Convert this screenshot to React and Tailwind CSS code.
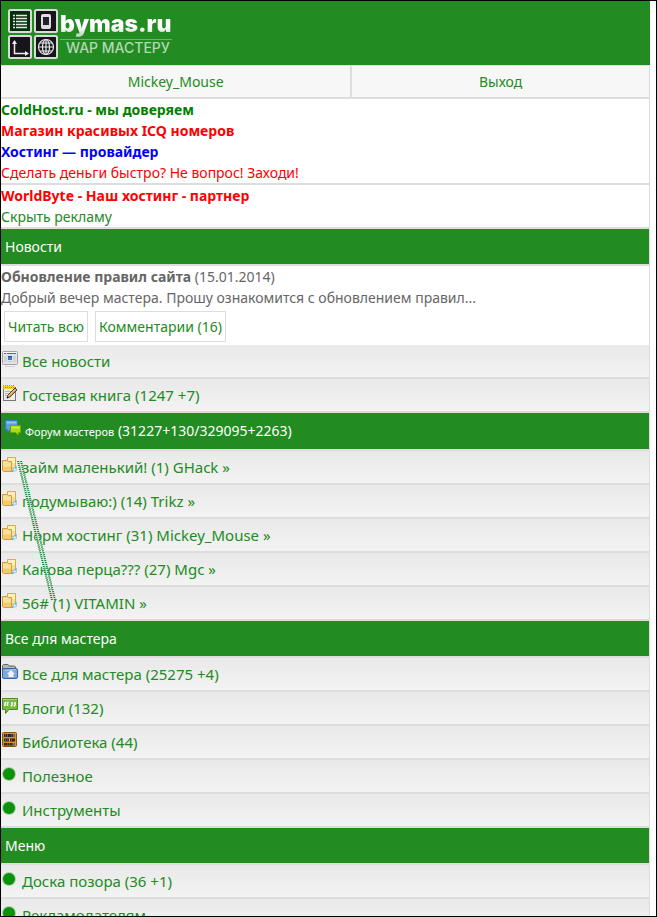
const ads = [
    { text: "ColdHost.ru - мы доверяем", className: "font-bold text-[#008000]" },
    { text: "Магазин красивых ICQ номеров", className: "font-bold text-[#ff0000]" },
    { text: "Хостинг — провайдер", className: "font-bold text-[#0000ff]" },
    { text: "Сделать деньги быстро? Не вопрос! Заходи!", className: "text-[#ff0000]" },
];

const topics = [
    "займ маленький! (1) GHack »",
    "подумываю:) (14) Trikz »",
    "Норм хостинг (31) Mickey_Mouse »",
    "Какова перца??? (27) Mgc »",
    "56# (1) VITAMIN »",
];

function NewsIcon() {
    return (
        <svg width="16" height="16" viewBox="0 0 16 16" aria-hidden="true">
            <rect x="0.5" y="0.5" width="15" height="13" rx="1" fill="#e2e3e5" stroke="#a2a4a8" />
            <path d="M1 1.5h14" stroke="#f6f6f6" />
            <path d="M2 2.5h2M5 2.5h9" stroke="#62666e" />
            <path d="M2 6h3M2 8h3M2 10h3M11 6h3M11 8h3M11 10h3M6 10.5h4" stroke="#c3c5c9" />
            <rect x="6" y="5" width="4" height="4" fill="#2f7fd0" />
            <path d="M6 5.5h4" stroke="#174f99" />
            <path d="M3 15.5h10" stroke="#d2d2d2" />
        </svg>
    );
}

function NotepadIcon() {
    return (
        <svg width="16" height="16" viewBox="0 0 16 16" aria-hidden="true">
            <rect x="1.5" y="2.5" width="12" height="13" fill="#ededeb" stroke="#77777a" />
            <path d="M1 1h12v3H1z" fill="#f3cf3a" />
            <path d="M1.5 0v4M3.5 0v4M5.5 0v4M7.5 0v4M9.5 0v4M11.5 0v4" stroke="#c08a12" strokeDasharray="1 1" />
            <path d="M3 6.5h7M3 8.5h5M3 10.5h3" stroke="#b5b5b5" />
            <path d="M5 13l1-3 7-7 2 2-7 7z" fill="#c99a55" stroke="#4a3418" strokeWidth="0.9" />
            <path d="M6.5 11L13 4.5" stroke="#f4d9a0" />
            <path d="M4.5 13.5l1-2 1 1z" fill="#111" />
        </svg>
    );
}

function ForumIcon() {
    return (
        <svg width="16" height="16" viewBox="0 0 16 16" aria-hidden="true">
            <path d="M0.5 0.5h12v9H5l-2.5 3V9.5h-2z" fill="#5b9fe0" stroke="#3a78bd" />
            <path d="M1.5 1.5h10v2h-10z" fill="#8fc3f2" />
            <path d="M5.5 5.5h10v7h-2V15l-3-2.5h-5z" fill="#a5dc12" stroke="#73a800" />
            <path d="M6.5 6.5h8v2h-8z" fill="#c5ee4c" />
        </svg>
    );
}

function TopicIcon() {
    return (
        <svg width="16" height="16" viewBox="0 0 16 16" aria-hidden="true">
            <path d="M5.5 0.5h8v11h-8z" fill="#fadf92" stroke="#dca953" />
            <path d="M6 1h7v5H6z" fill="#fff0b8" />
            <path d="M0.5 3.5h5l1 1h3v10h-8l-1-1z" fill="#f2cb6e" stroke="#d29c46" />
            <path d="M1 4.5h4l1 1h3v4H1z" fill="#fae09a" />
            <path d="M10 14.5l2.5-4.5 2-1v4.5z" fill="#e3e7ea" stroke="#b3bcc3" strokeWidth="0.8" />
            <path d="M13.5 9.5v2M10.5 13v2" stroke="#42b4ec" strokeWidth="1.5" />
        </svg>
    );
}

function HomeFolderIcon() {
    return (
        <svg width="16" height="16" viewBox="0 0 16 16" aria-hidden="true">
            <path d="M0.5 13V1.5l1-1H6l1 1.5h5.5l1 1V6" fill="#b4b6b9" stroke="#65676b" />
            <rect x="0.5" y="4.5" width="15" height="10" rx="1.5" fill="#7ba9dd" stroke="#3a66a3" />
            <path d="M3 6.5l11-1" stroke="#a9cbf0" />
            <path d="M9 6l4 4h-1.5v3h-5v-3H5z" fill="#f3f3f3" />
        </svg>
    );
}

function QuoteIcon() {
    return (
        <svg width="16" height="16" viewBox="0 0 16 16" aria-hidden="true">
            <path d="M0.5 0.5h15v11H7l-3.5 4v-4h-3z" fill="#78b944" stroke="#4b8b1f" />
            <path d="M1 1.5h14" stroke="#a5d977" />
            <path d="M3 8V5l1-1M5.5 8V5l1-1M10 4v3l-1 1.5M13 4v3l-1 1.5" fill="none" stroke="#fff" strokeWidth="1.5" />
        </svg>
    );
}

function BookshelfIcon() {
    return (
        <svg width="16" height="16" viewBox="0 0 16 16" aria-hidden="true">
            <rect x="0.5" y="0.5" width="14" height="14" rx="1" fill="#d2942f" stroke="#8a560f" />
            <path d="M2 2h11v3H2zM2 6.5h11v3H2zM2 11h11v2.5H2z" fill="#3a2010" />
            <path d="M3.5 2v3M9.5 6.5v3M5.5 11v2.5" stroke="#d0281a" />
            <path d="M5.5 2v3M3.5 6.5v3M7.5 11v2.5" stroke="#238a2c" />
            <path d="M9.5 2v3M5.5 6.5v3M10.5 11v2.5" stroke="#1c4fe4" strokeWidth="1.5" />
            <path d="M12 2v3M7.5 6.5v3M12 11v2.5" stroke="#e8b930" />
        </svg>
    );
}

function DotIcon() {
    return (
        <svg width="16" height="16" viewBox="0 0 16 16" aria-hidden="true">
            <circle cx="7" cy="8" r="7" fill="#0a960a" opacity="0.3" />
            <circle cx="7" cy="8" r="6" fill="#0a920a" />
        </svg>
    );
}

function LogoTiles() {
    return (
        <svg width="50" height="50" viewBox="0 0 50 50" aria-hidden="true">
            <g stroke="#d8dcd8" strokeWidth="2">
                <rect x="1" y="1" width="22" height="22" rx="1.5" fill="#06300a" />
                <rect x="27" y="1" width="22" height="22" rx="1.5" fill="#17141c" />
                <rect x="1" y="27" width="22" height="22" rx="1.5" fill="#17141c" />
                <rect x="27" y="27" width="22" height="22" rx="1.5" fill="#17141c" />
            </g>
            <path d="M5 6.5h2M5 9.5h2M5 12.5h2M5 15.5h2M5 18.5h2M8 6.5h11M8 9.5h11M8 12.5h11M8 15.5h11M8 18.5h11" stroke="#e6e6e6" strokeWidth="1.5" />
            <rect x="33" y="5" width="10" height="15" rx="2" fill="#dedee2" />
            <rect x="35" y="8" width="6" height="8" fill="#24212b" />
            <path d="M6.5 32v12.5h12" fill="none" stroke="#eee" strokeWidth="1.5" />
            <path d="M4 35l2.5-4 2.5 4zM17 42l4 2.5-4 2.5z" fill="#eee" />
            <g fill="none" stroke="#e6e6e6" strokeWidth="1.2">
                <circle cx="38" cy="38" r="7.5" />
                <ellipse cx="38" cy="38" rx="3.5" ry="7.5" />
                <path d="M38 30.5v15M30.5 38h15M32 34h12M32 42h12" />
            </g>
        </svg>
    );
}

function Title({ children }) {
    return (
        <h2 className="border-b-2 border-[#dddddd] bg-[#228b22] px-1 py-[7px] leading-[21px] text-white">
            {children}
        </h2>
    );
}

function Row({ icon, children }) {
    return (
        <li className="border-b-2 border-[#dddddd] bg-linear-to-b from-[#e9e9e9] to-[#f3f3f3]">
            <a href="#" className="flex h-8 items-start gap-1 pl-px pt-1.5 text-[15px] leading-5 whitespace-nowrap">
                <span className="w-4 shrink-0">{icon}</span>
                <span>{children}</span>
            </a>
        </li>
    );
}

export default function App() {
    return (
        <div className="h-screen overflow-hidden border border-black bg-white pr-1.5 font-['Comic_Sans_MS','Noto_Sans',sans-serif] text-sm leading-[21px] text-[#228b22]">
            <header className="flex h-16 items-start gap-0.5 bg-[#228b22] pl-[7px] pt-2">
                <LogoTiles />
                <div className="font-['Inter',sans-serif]">
                    <div className="bg-linear-to-b from-white from-60% to-[#a9c4a9] bg-clip-text text-[23px] leading-[30px] font-black text-transparent">
                        bymas.ru
                    </div>
                    <div className="border-t border-[#6fb56f] pl-1.5 text-sm leading-4 font-medium text-[#b4d8b4]">
                        WAP МАСТЕРУ
                    </div>
                </div>
            </header>

            <div className="border-r border-[#dddddd]">
                <nav className="flex border-t border-b-2 border-[#dddddd] bg-[#f7f7f7] text-center">
                    <a href="#" className="flex-auto border-r-2 border-[#dddddd] py-[5px]">Mickey_Mouse</a>
                    <a href="#" className="flex-auto py-[5px]">Выход</a>
                </nav>

                <div className="border-b-2 border-[#dddddd]">
                    {ads.map((ad) => (
                        <a key={ad.text} href="#" className={`block ${ad.className}`}>{ad.text}</a>
                    ))}
                </div>
                <div className="border-b-2 border-[#dddddd]">
                    <a href="#" className="block font-bold text-[#ff0000]">WorldByte - Наш хостинг - партнер</a>
                    <a href="#" className="block">Скрыть рекламу</a>
                </div>

                <Title>Новости</Title>
                <div className="text-[#666666]">
                    <p><b>Обновление правил сайта</b> (15.01.2014)</p>
                    <p>Добрый вечер мастера. Прошу ознакомится с обновлением правил...</p>
                    <div className="flex gap-[7px] px-[3px] py-[3px] text-[#228b22]">
                        <a href="#" className="border border-[#dddddd] px-[3px] py-1">Читать всю</a>
                        <a href="#" className="border border-[#dddddd] px-[3px] py-1">Комментарии (16)</a>
                    </div>
                </div>
                <ul>
                    <Row icon={<NewsIcon />}>Все новости</Row>
                    <Row icon={<NotepadIcon />}>Гостевая книга (1247 +7)</Row>
                </ul>

                <Title>
                    <a href="#" className="flex items-start gap-1">
                        <ForumIcon />
                        <span className="leading-[22px]"><span className="text-[11px] leading-none">Форум мастеров</span> (31227+130/329095+2263)</span>
                    </a>
                </Title>
                <div className="relative">
                    <ul>
                        {topics.map((topic) => (
                            <Row key={topic} icon={<TopicIcon />}>{topic}</Row>
                        ))}
                    </ul>
                    <svg className="pointer-events-none absolute top-2.5 left-4" width="40" height="142" viewBox="0 0 40 142" aria-hidden="true">
                        <path d="M2 0L36 139" stroke="#e6f2e0" strokeWidth="5" opacity="0.6" />
                        <g strokeWidth="2" strokeDasharray="1 1">
                            <path d="M1 0L35 139" stroke="#007a2a" />
                            <path d="M4 0L38 139" stroke="#007a3a" />
                        </g>
                    </svg>
                </div>

                <Title>Все для мастера</Title>
                <ul>
                    <Row icon={<HomeFolderIcon />}>Все для мастера (25275 +4)</Row>
                    <Row icon={<QuoteIcon />}>Блоги (132)</Row>
                    <Row icon={<BookshelfIcon />}>Библиотека (44)</Row>
                    <Row icon={<DotIcon />}>Полезное</Row>
                    <Row icon={<DotIcon />}>Инструменты</Row>
                </ul>

                <Title>Меню</Title>
                <ul>
                    <Row icon={<DotIcon />}>Доска позора (36 +1)</Row>
                    <Row icon={<DotIcon />}>Рекламодателям</Row>
                </ul>
            </div>
        </div>
    );
}
